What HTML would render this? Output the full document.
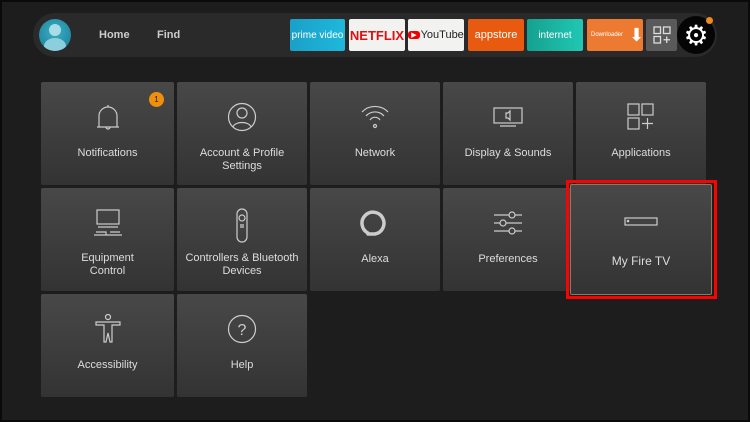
<!DOCTYPE html>
<html><head><style>
*{margin:0;padding:0;box-sizing:border-box}
body{width:750px;height:422px;background:#1d1d1d;font-family:"Liberation Sans",sans-serif;position:relative;overflow:hidden}
.frame{position:absolute;left:0;top:0;width:750px;height:422px;border:2px solid #0a0a0a;pointer-events:none}
.nav{position:absolute;left:33px;top:13px;width:684px;height:44px;border-radius:22px;background:#2a2a2a}
.av{position:absolute;left:39px;top:19px;width:32px;height:32px;border-radius:50%;background:radial-gradient(circle at 50% 40%,#3ab0c8,#1a7a90);overflow:hidden}
.av:before{content:"";position:absolute;left:10px;top:5px;width:12px;height:12px;border-radius:50%;background:#a8dde8}
.av:after{content:"";position:absolute;left:5px;top:19px;width:22px;height:16px;border-radius:50%;background:#8ccfdc}
.nt{position:absolute;top:29px;color:#ccc;font-size:11px;font-weight:bold}
.app{position:absolute;top:19px;height:32px;width:56px;border-radius:2px;display:flex;align-items:center;justify-content:center;font-size:10px;color:#fff}
.tile{position:absolute;width:133px;height:103px;border-radius:2px;background:linear-gradient(#484848,#333);color:#ddd;font-size:11px;text-align:center}
.tile svg{position:absolute;left:50%;transform:translateX(-50%);top:20px}
.tile .l{position:absolute;left:0;right:0;top:64px;line-height:13px}
</style></head><body>
<div class="nav"></div>
<div class="av"></div>
<div class="nt" style="left:99px">Home</div>
<div class="nt" style="left:157px">Find</div>
<div class="app" style="left:290px;width:55px;background:linear-gradient(90deg,#1aa0c8,#1eb8dc)">prime video</div>
<div class="app" style="left:349px;background:#f2f2f0;color:#d11;font-weight:bold;font-size:13px">NETFLIX</div>
<div class="app" style="left:408px;background:#f2f2f0;color:#222;font-size:11px"><span style="background:#e00;color:#fff;border-radius:3px;padding:0 3px;font-size:7px;margin-right:1px">▶</span>YouTube</div>
<div class="app" style="left:468px;background:#e85a10;font-size:11px">appstore</div>
<div class="app" style="left:527px;background:linear-gradient(90deg,#16a090,#20c8b4)">internet</div>
<div class="app" style="left:587px;background:#ec7a30;font-size:6px;justify-content:flex-start;padding-left:4px">Downloader <span style="font-size:18px;margin-left:6px">⬇</span></div>
<div class="app" style="left:646px;width:31px;background:#5a5a5a"><svg width="18" height="18" viewBox="0 0 18 18" fill="none" stroke="#ddd" stroke-width="1.3"><rect x="1" y="1" width="6.5" height="6.5"/><rect x="10.5" y="1" width="6.5" height="6.5"/><rect x="1" y="10.5" width="6.5" height="6.5"/><path d="M13.75 10.5v6.5M10.5 13.75h6.5"/></svg></div>
<div style="position:absolute;left:677px;top:16px;width:38px;height:38px;border-radius:50%;background:#050505;display:flex;align-items:center;justify-content:center;color:#fff;font-size:28px">⚙</div>
<div style="position:absolute;left:706px;top:17px;width:7px;height:7px;border-radius:50%;background:#f08a20"></div>

<div class="tile" style="left:41px;top:82px"><svg width="30" height="30" viewBox="0 0 30 30" fill="none" stroke="#ccc" stroke-width="1.2"><path d="M15 3v2M6 25V14a9 9 0 0 1 18 0v11zM4 25h22M13 25a2 2 0 0 0 4 0"/></svg><div class="l" style="top:65px">Notifications</div>
<div style="position:absolute;left:108px;top:10px;width:15px;height:15px;border-radius:50%;background:#f0900a;color:#222;font-size:8px;line-height:15px">1</div></div>
<div class="tile" style="left:177px;top:82px;width:130px"><svg width="30" height="30" viewBox="0 0 30 30" fill="none" stroke="#ccc" stroke-width="1.2"><circle cx="15" cy="15" r="13.5"/><circle cx="15" cy="11" r="5"/><path d="M6 25c2-6 16-6 18 0"/></svg><div class="l" style="top:65px">Account &amp; Profile<br>Settings</div></div>
<div class="tile" style="left:310px;top:82px;width:130px"><svg width="30" height="30" viewBox="0 0 30 30" fill="none" stroke="#ccc" stroke-width="1.2"><path d="M2 10a18 18 0 0 1 26 0M6 14a12 12 0 0 1 18 0M10 18a6 6 0 0 1 10 0"/><circle cx="15" cy="24" r="1.5"/></svg><div class="l" style="top:65px">Network</div></div>
<div class="tile" style="left:443px;top:82px;width:130px"><svg width="30" height="30" viewBox="0 0 30 30" fill="none" stroke="#ccc" stroke-width="1.2"><rect x="1" y="6" width="28" height="15"/><path d="M7 24h16M13 11h2l2-2v9l-2-2h-2z"/></svg><div class="l" style="top:65px">Display &amp; Sounds</div></div>
<div class="tile" style="left:576px;top:82px;width:130px"><svg width="30" height="30" viewBox="0 0 30 30" fill="none" stroke="#ccc" stroke-width="1.2"><rect x="2" y="2" width="11" height="11"/><rect x="16" y="2" width="11" height="11"/><rect x="2" y="16" width="11" height="11"/><path d="M21.5 16v11M16 21.5h11"/></svg><div class="l" style="top:65px">Applications</div></div>

<div class="tile" style="left:41px;top:188px"><svg width="32" height="32" viewBox="0 0 32 32" fill="none" stroke="#ccc" stroke-width="1.2"><rect x="5" y="2" width="22" height="14"/><path d="M6 19h20M2 27h28M4 24h10v3M18 24h10"/></svg><div class="l">Equipment<br>Control</div></div>
<div class="tile" style="left:177px;top:188px;width:130px"><svg width="14" height="36" viewBox="0 0 14 36" fill="none" stroke="#ccc" stroke-width="1.2"><rect x="2" y="1" width="10" height="33" rx="5"/><circle cx="7" cy="10" r="3"/><path d="M5 17h4M5 19h4"/></svg><div class="l">Controllers &amp; Bluetooth<br>Devices</div></div>
<div class="tile" style="left:310px;top:188px;width:130px"><svg width="30" height="30" viewBox="0 0 30 30" fill="none" stroke="#ccc" stroke-width="3.5"><path d="M8 25A11 11 0 1 1 15 26H8z" stroke-linejoin="round"/></svg><div class="l" style="top:65px">Alexa</div></div>
<div class="tile" style="left:443px;top:188px;width:130px"><svg width="30" height="30" viewBox="0 0 30 30" fill="none" stroke="#ccc" stroke-width="1.2"><path d="M1 7h15M22 7h7M1 15h6M13 15h16M1 23h15M22 23h7"/><circle cx="19" cy="7" r="3"/><circle cx="10" cy="15" r="3"/><circle cx="19" cy="23" r="3"/></svg><div class="l" style="top:65px">Preferences</div></div>
<div style="position:absolute;left:566px;top:180px;width:151px;height:119px;border:3px solid #f00"></div>
<div class="tile" style="left:570px;top:184px;width:142px;height:111px;border:1px solid #8a7c5a"><svg width="34" height="10" viewBox="0 0 34 10" fill="none" stroke="#ccc" stroke-width="1.2" style="top:32px"><rect x="1" y="1" width="32" height="7"/><circle cx="4" cy="4" r=".7" fill="#ccc"/></svg><div class="l" style="top:70px;font-size:12px">My Fire TV</div></div>

<div class="tile" style="left:41px;top:294px"><svg width="26" height="30" viewBox="0 0 26 30" fill="none" stroke="#ccc" stroke-width="1.2"><circle cx="13" cy="3" r="2.5"/><path d="M1 8h24v3h-8v17h-2l-2-9-2 9H9V11H1z"/></svg><div class="l" style="top:65px">Accessibility</div></div>
<div class="tile" style="left:177px;top:294px;width:130px"><svg width="30" height="30" viewBox="0 0 30 30" fill="none" stroke="#ccc" stroke-width="1.2"><circle cx="15" cy="15" r="13.5"/><text x="15" y="21" font-size="16" fill="#ccc" stroke="none" text-anchor="middle" font-family="Liberation Sans">?</text></svg><div class="l" style="top:65px">Help</div></div>
<div class="frame"></div>
</body></html>
